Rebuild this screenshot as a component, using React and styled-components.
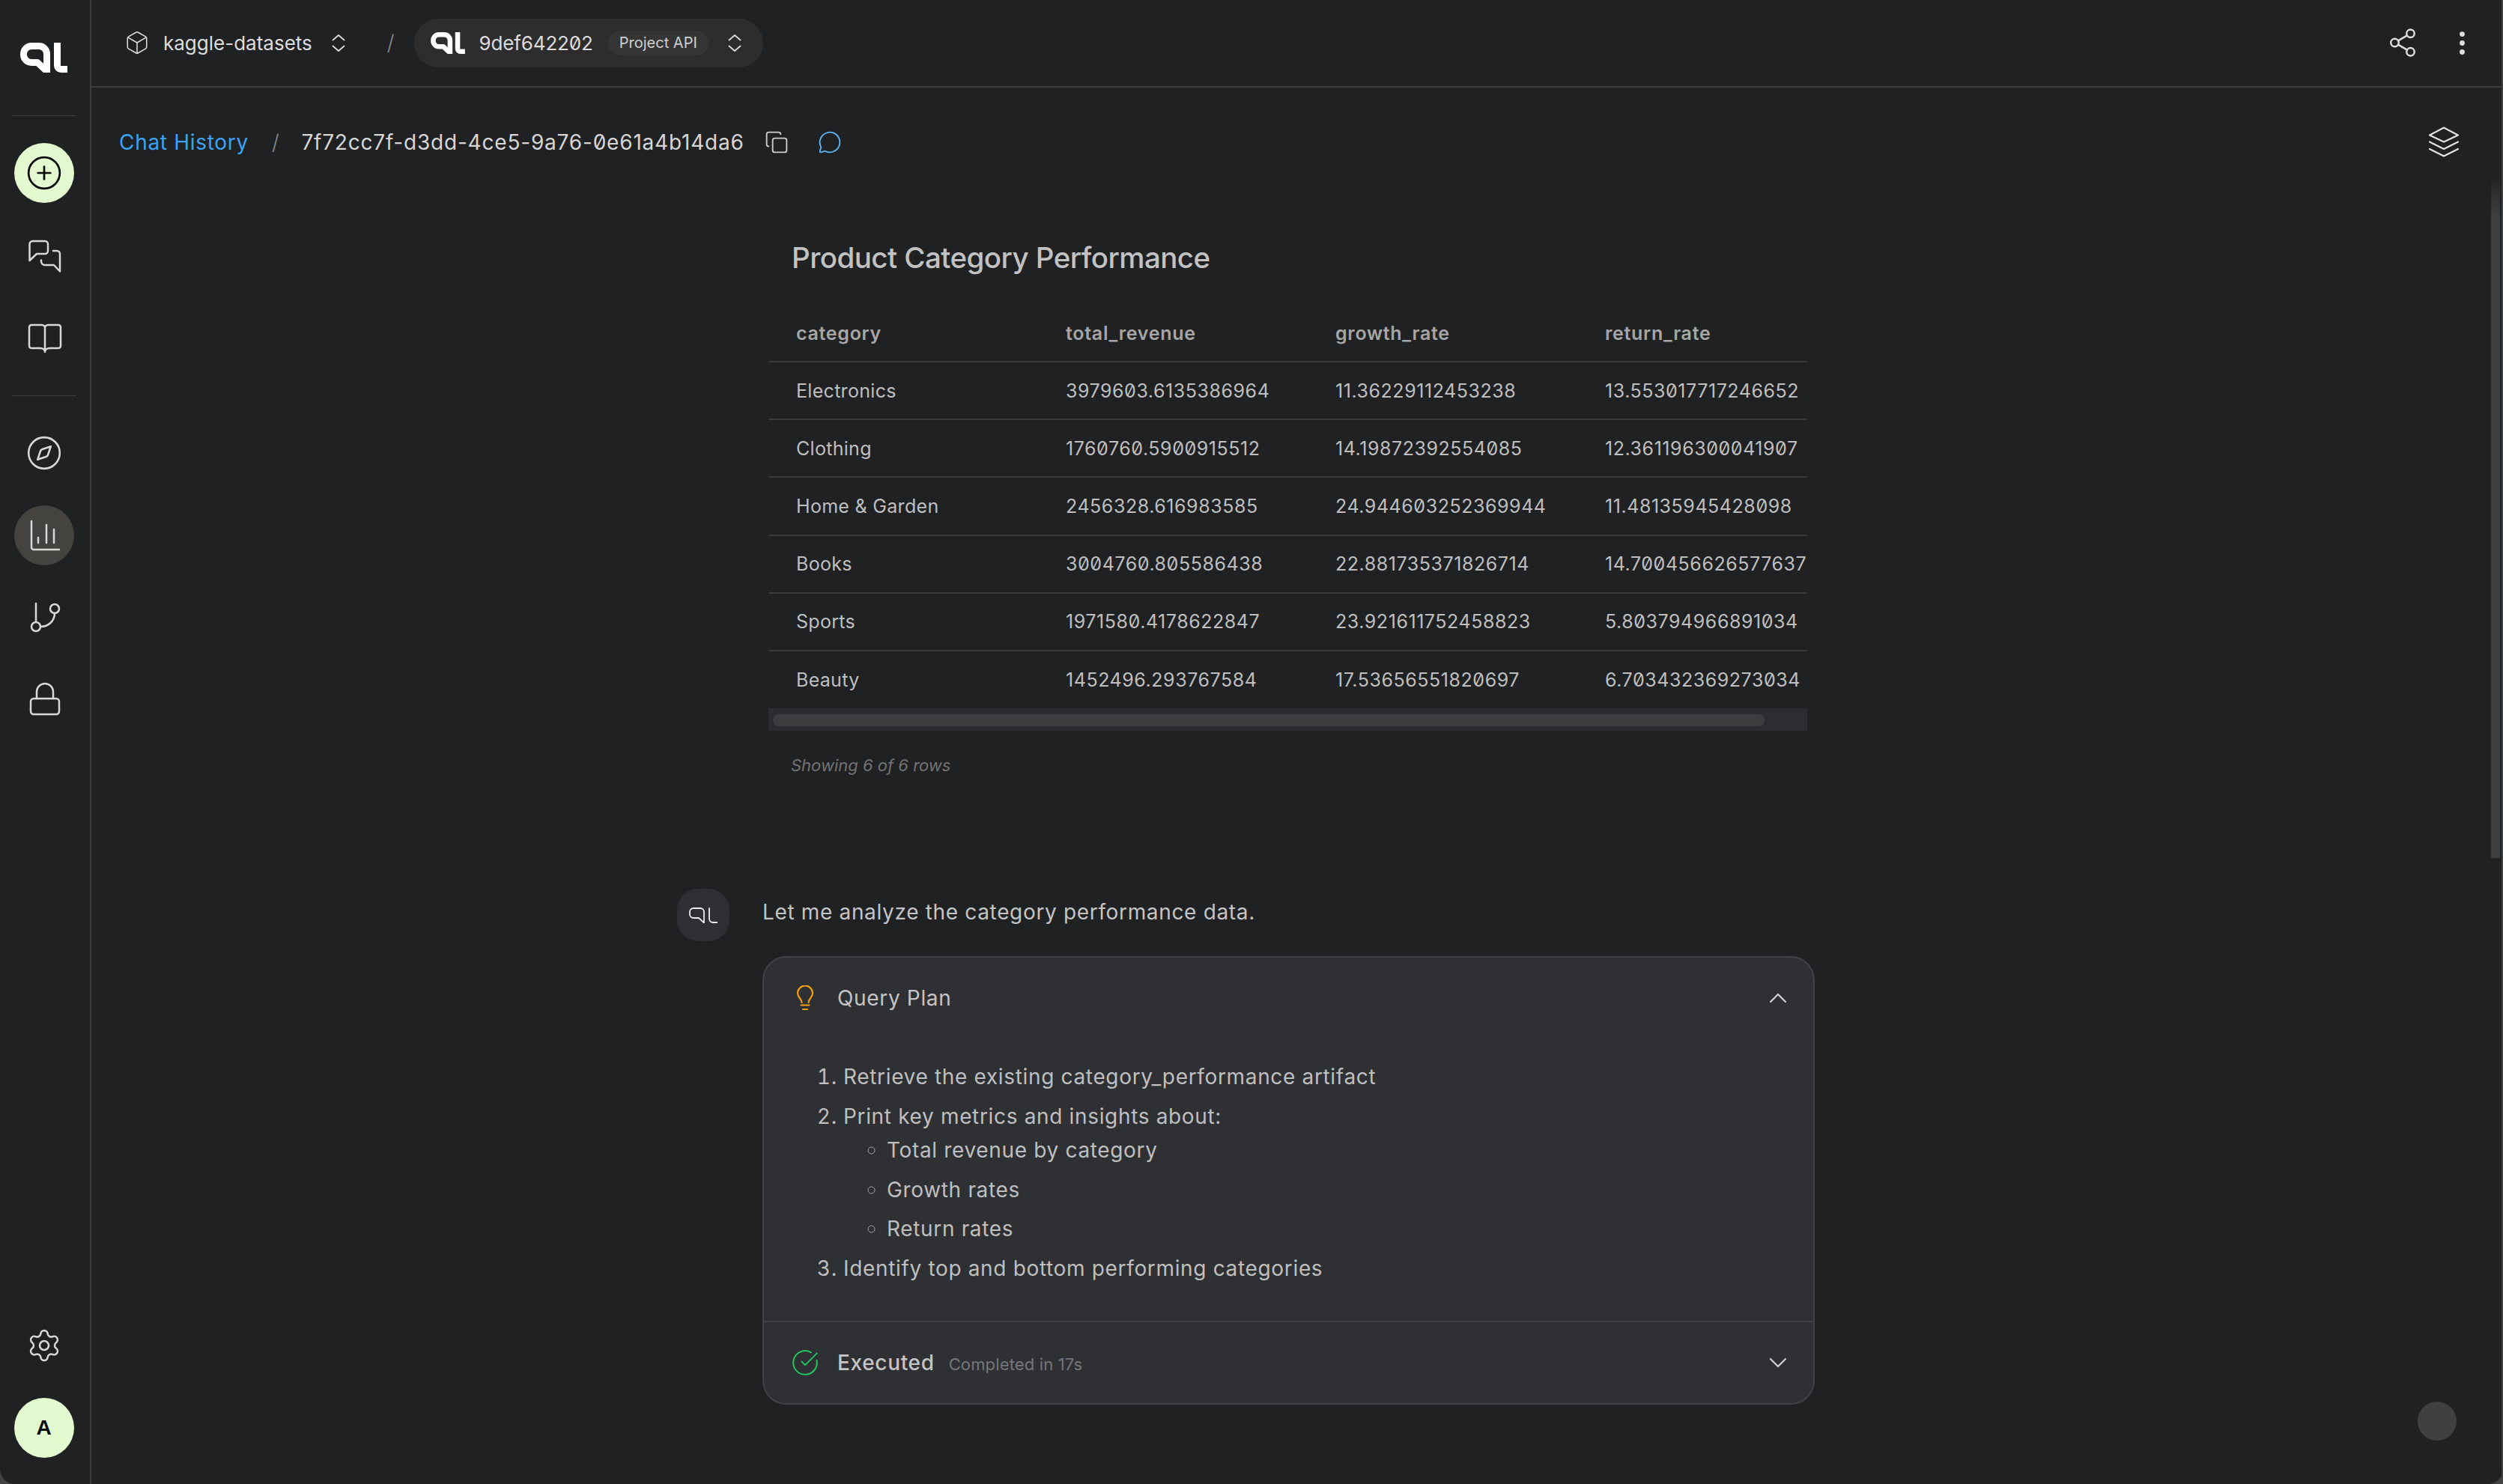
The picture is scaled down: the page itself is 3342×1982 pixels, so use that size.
import React from "react";
import styled, { createGlobalStyle } from "styled-components";
import {
  ChevronDown, ChevronUp, CircleCheckBig, CirclePlus, Compass, Copy, EllipsisVertical,
  MessageCircle, Settings, Share2, Box,
} from "lucide-react";

const Global = createGlobalStyle`
  html, body { margin: 0; padding: 0; background: #424242; }
  body { font-family: "Inter", "Liberation Sans", sans-serif; font-feature-settings: "zero" 1; -webkit-font-smoothing: antialiased; }
  * { box-sizing: border-box; }
`;

const Shell = styled.div`
  display: flex; width: 3342px; height: 1982px; overflow: hidden;
  background: #202123; border-radius: 0 0 20px 20px;
`;
const Sidebar = styled.aside`
  width: 122px; flex: none; display: flex; flex-direction: column; align-items: center;
  border-right: 2px solid #3c3d3f; padding: 0 3px 35px 0;
`;
const LogoMark = styled.div`
  display: flex; height: 154px; align-items: center; color: #fff;
`;
const Rule = styled.div`
  width: 86px; height: 1px; background: #3c3d3f; margin: ${p => p.$m || "0 0 36px"};
  flex: none;
`;
const NavStack = styled.nav`
  display: flex; flex-direction: column; gap: 30px; align-items: center;
`;
const NavButton = styled.div`
  width: 80px; height: 80px; border-radius: 50%; display: flex; align-items: center; justify-content: center;
  color: ${p => (p.$tone === "accent" ? "#0b0b0b" : "#d8d8d8")};
  background: ${p => (p.$tone === "accent" ? "#e3fad0" : p.$tone === "active" ? "#45433f" : "transparent")};
`;
const Spacer = styled.div`flex: 1;`;
const UserBadge = styled.div`
  width: 80px; height: 80px; border-radius: 50%; background: #e3fad0; color: #0b0b0b;
  display: flex; align-items: center; justify-content: center; font: 700 28px "Liberation Sans", sans-serif;
`;
const Main = styled.main`
  position: relative; flex: 1; min-width: 0; display: flex; flex-direction: column;
  border-right: 2px solid #3c3d3f;
`;
const TopBar = styled.header`
  height: 117px; flex: none; display: flex; align-items: center; padding: 0 0 1px 44px;
  border-bottom: 2px solid #3c3d3f; color: #dcdcdc; font-size: 26px;
`;
const Crumb = styled.div`
  display: flex; align-items: center; gap: 15px; margin-right: 56px;
`;
const CrumbLabel = styled.span`margin-left: 3px;`;
const CrumbToggle = styled.span`display: flex; margin-left: 11px;`;
const Slash = styled.span`
  color: #8a8a8a; font-size: 28px; font-weight: 300;
`;
const ProjectPill = styled.div`
  display: flex; align-items: center; height: 65px; margin-left: 26px; padding: 0 29px 0 22px; border-radius: 33px;
  background: #2d2d2e;
`;
const PillLogo = styled.span`display: flex; color: #fff;`;
const PillId = styled.span`margin: 0 20px 0 19px; letter-spacing: -.15px;`;
const PillTag = styled.span`
  display: flex; align-items: center; height: 33px; padding: 0 15px; margin-right: 26px; border-radius: 17px;
  background: #353535; font-size: 20px; color: #cfcfcf;
`;
const TopActions = styled.div`
  margin-left: auto; display: flex; align-items: center; gap: 38px; padding-right: 32px; color: #dedede;
`;
const BreadcrumbRow = styled.div`
  flex: none; height: 74px; margin-top: 36px; padding: 0 56px 0 37px; display: flex; align-items: center;
  font-size: 28px; letter-spacing: .7px; color: #d6d6d6;
`;
const ChatLink = styled.a`color: #3ba3f4;`;
const ChatId = styled.span`margin: 0 27px 0 0; letter-spacing: .8px;`;
const CrumbSlash = styled(Slash)`margin: 0 29px 0 31px;`;
const CopyWrap = styled.span`display: flex; margin-right: 39px; color: #cfcfcf;`;
const BlueWrap = styled.span`display: flex; color: #5fb6f5;`;
const LayerWrap = styled.span`display: flex; margin-left: auto; color: #e2e2e2;`;
const Scroller = styled.div`
  flex: 1; min-height: 0; padding: 88px 135px 0 0; overflow: hidden;
`;
const Thread = styled.div`
  width: 1519px; margin: 0 auto; display: flex; flex-direction: column;
`;
const Artifact = styled.section`
  margin-left: 122px; width: 1387px; display: flex; flex-direction: column;
`;
const ArtifactTitle = styled.h2`
  margin: 0 0 31px 31px; height: 60px; line-height: 58px; font-size: 38.5px; font-weight: 500; color: #c2c2c2; letter-spacing: -.55px;
`;
const TableClip = styled.div`overflow: hidden; width: 1387px;`;
const DataTable = styled.table`
  width: 1440px; table-layout: fixed; border-collapse: collapse; font-size: 25px; color: #bfbfbf;
`;
const HeadCell = styled.th`
  height: 77px; padding: 1px 0 0 37px; text-align: left; font-weight: 600; color: #a6a6a6; white-space: nowrap;
  letter-spacing: .7px; border-bottom: 2px solid #38393b;
`;
const BodyCell = styled.td`
  height: 77.2px; padding: 0 0 0 37px; white-space: nowrap; letter-spacing: ${p => (p.$num ? ".55px" : ".3px")};
`;
const BodyRow = styled.tr`
  &:not(:last-child) td { border-bottom: 2px solid #38393b; }
`;
const Track = styled.div`
  height: 30px; padding: 8px 57px 6px 6px; background: #2c2d31;
`;
const Thumb = styled.div`height: 16px; border-radius: 8px; background: #3c3d3e;`;
const RowCount = styled.div`
  margin: 30px 0 0 30px; height: 32px; line-height: 32px; font-size: 22px; font-style: italic; color: #737373;
`;
const Message = styled.article`
  margin-top: 149px; display: flex; gap: 44px; align-items: flex-start;
`;
const Avatar = styled.div`
  flex: none; width: 70px; height: 70px; border-radius: 28px; background: #2d2f32;
  display: flex; align-items: center; justify-content: center; color: #eee;
`;
const MessageBody = styled.div`flex: 1; min-width: 0;`;
const Lead = styled.p`
  margin: 0 0 25px; height: 65px; padding-top: 14px; line-height: 34px; font-size: 28px; letter-spacing: .66px; color: #c4c4c4; font-weight: 400;
`;
const Card = styled.div`
  border: 2px solid #414245; border-radius: 32px; background: #2f3034; overflow: hidden;
`;
const CardHead = styled.div`
  display: flex; align-items: center; height: ${p => p.$h}px; padding: 0 27px 0 33px; color: #c4c4c4;
  border-top: ${p => (p.$sep ? "2px solid #3e3f42" : "none")};
`;
const IconSlot = styled.span`
  width: 44px; display: flex; justify-content: center; margin-right: 21px; color: ${p => p.$c};
`;
const CardTitle = styled.span`font-size: 28px; letter-spacing: .66px; font-weight: ${p => p.$w || 400}; `;
const CardMeta = styled.span`font-size: 22px; letter-spacing: .15px; color: #767779; margin: 3px 0 0 19px;`;
const CardChevron = styled.span`display: flex; margin-left: auto; color: #d2d2d2;`;
const Plan = styled.ol`
  margin: 0; padding: 25px 0 44px 106px; font-size: 28px; letter-spacing: .66px; color: #bfbfbf; line-height: 52.5px;
`;
const PlanItem = styled.li``;
const SubList = styled.ul`
  list-style-type: circle; margin: -7px 0 0; padding: 0 0 0 58px;
  li::marker { color: #a8a8a8; }
`;
const FloatDot = styled.div`
  position: absolute; right: 60px; bottom: 58px; width: 52px; height: 52px; border-radius: 50%; background: #3f4042;
`;
const ScrollRail = styled.div`
  position: absolute; right: 2px; top: 236px; width: 12px; height: 910px; background: linear-gradient(#202123, #3e3e3e 50px);
`;

const block = { display: "block" };
function QL({ w, h }) {
  return (
    <svg width={w} height={h} viewBox="0 0 63 40" fill="none" stroke="currentColor" strokeWidth={9} strokeLinejoin="round" style={block}>
      <path d="M35.5 41 V15 a10.5 10.5 0 0 0-10.5-10.5 H15 a10.5 10.5 0 0 0-10.5 10.5 v1 a10.5 10.5 0 0 0 10.5 10.5 H23 L35.5 38" />
      <path d="M49.5 0 V30.5 a5 5 0 0 0 5 5 H63" />
    </svg>
  );
}
const QLThin = () => (
  <svg width={38} height={21} viewBox="0 0 38 21" fill="none" stroke="currentColor" strokeWidth={1.8} strokeLinecap="round" strokeLinejoin="round" style={block}>
    <path d="M20 20.5 V6 a5 5 0 0 0-5-5 H6 a5 5 0 0 0-5 5 v3 a5 5 0 0 0 5 5 H13 L20 20.5" />
    <path d="M27 1 V15 a5 5 0 0 0 5 5 H37.5" />
  </svg>
);
function Draw({ size = 48, w, h, vb, sw = 2.5, children }) {
  return (
    <svg width={w || size} height={h || size} viewBox={vb || `0 0 ${size} ${size}`} fill="none" stroke="currentColor" strokeWidth={sw} strokeLinecap="round" strokeLinejoin="round" style={block}>
      {children}
    </svg>
  );
}
const UpDown = () => (
  <Draw w={18} h={23} vb="0 0 18 23" sw={1.8}>
    <path d="M1.5 7.5 L9 1 L16.5 7.5 M1.5 15.5 L9 22 L16.5 15.5" />
  </Draw>
);
const ChatsIcon = () => (
  <Draw>
    <path d="M4.5 31 V9 a4 4 0 0 1 4-4 H25 a4 4 0 0 1 4 4 V18 a4 4 0 0 1-4 4 H14 Z" />
    <path d="M36 18 H41 a4 4 0 0 1 4 4 V45.5 L37 37 H25 a5 5 0 0 1-5-5 V30.5" />
  </Draw>
);
const BookIcon = () => (
  <Draw>
    <path d="M25 11 a4 4 0 0 0-4-4 H7 a3 3 0 0 0-3 3 V35 a3 3 0 0 0 3 3 H19 c3 0 6 2 6 5 c0-3 3-5 6-5 H43 a3 3 0 0 0 3-3 V10 a3 3 0 0 0-3-3 H29 a4 4 0 0 0-4 4 V43" />
  </Draw>
);
const BarsIcon = () => (
  <Draw>
    <path d="M7 5 V40 a3 3 0 0 0 3 3 H44" />
    <path d="M16 27 V34 M27 10 V34 M37 16 V34" />
  </Draw>
);
const BranchIcon = () => (
  <Draw>
    <path d="M13 5 V30" />
    <circle cx="13" cy="36" r="6" />
    <circle cx="38" cy="12" r="6" />
    <path d="M38 18 C38 28 30 36 19 36" />
  </Draw>
);
const LockIcon = () => (
  <Draw>
    <rect x="6" y="22" width="38" height="21" rx="4" />
    <path d="M14 22 V13 a11 11 0 0 1 22 0 V22" />
  </Draw>
);
const LayersIcon = () => (
  <Draw w={42} h={42} vb="0 0 42 42" sw={2.2}>
    <path d="M21 1.5 L40 11.5 L21 20.5 L2 11.5 Z" />
    <path d="M2 20.5 L21 30 L40 20.5" />
    <path d="M2 30 L21 39.5 L40 30" />
  </Draw>
);
const BulbIcon = () => (
  <Draw w={24} h={34} vb="0 0 24 34" sw={2.2}>
    <path d="M7.5 23 C7.5 18 2 16 2 10.5 a10 10 0 0 1 20 0 C22 16 16.5 18 16.5 23" />
    <path d="M6.5 26.5 H17.5 M9 32 H15" />
  </Draw>
);

const COLS = ["category", "total_revenue", "growth_rate", "return_rate"];
const ROWS = [
  ["Electronics", "3979603.6135386964", "11.36229112453238", "13.553017717246652"],
  ["Clothing", "1760760.5900915512", "14.19872392554085", "12.361196300041907"],
  ["Home & Garden", "2456328.616983585", "24.944603252369944", "11.48135945428098"],
  ["Books", "3004760.805586438", "22.881735371826714", "14.700456626577637"],
  ["Sports", "1971580.4178622847", "23.921611752458823", "5.803794966891034"],
  ["Beauty", "1452496.293767584", "17.53656551820697", "6.703432369273034"],
];

export default function App() {
  return (
    <>
      <Global />
      <Shell>
        <Sidebar>
          <LogoMark><QL w={63} h={40} /></LogoMark>
          <Rule />
          <NavStack>
            <NavButton $tone="accent"><CirclePlus size={50} strokeWidth={1.3} /></NavButton>
            <NavButton><ChatsIcon /></NavButton>
            <NavButton><BookIcon /></NavButton>
          </NavStack>
          <Rule $m="37px 0 36px" />
          <NavStack>
            <NavButton><Compass size={50} strokeWidth={1.25} /></NavButton>
            <NavButton $tone="active"><BarsIcon /></NavButton>
            <NavButton><BranchIcon /></NavButton>
            <NavButton><LockIcon /></NavButton>
          </NavStack>
          <Spacer />
          <NavStack>
            <NavButton><Settings size={48} strokeWidth={1.25} /></NavButton>
            <UserBadge>A</UserBadge>
          </NavStack>
        </Sidebar>
        <Main>
          <TopBar>
            <Crumb>
              <Box size={34} strokeWidth={1.1} />
              <CrumbLabel>kaggle-datasets</CrumbLabel>
              <CrumbToggle><UpDown /></CrumbToggle>
            </Crumb>
            <Slash>/</Slash>
            <ProjectPill>
              <PillLogo><QL w={46} h={29} /></PillLogo>
              <PillId>9def642202</PillId>
              <PillTag>Project API</PillTag>
              <UpDown />
            </ProjectPill>
            <TopActions>
              <Share2 size={42} strokeWidth={1.4} />
              <EllipsisVertical size={41} strokeWidth={2} />
            </TopActions>
          </TopBar>
          <BreadcrumbRow>
            <ChatLink>Chat History</ChatLink>
            <CrumbSlash>/</CrumbSlash>
            <ChatId>7f72cc7f-d3dd-4ce5-9a76-0e61a4b14da6</ChatId>
            <CopyWrap><Copy size={32} strokeWidth={1.4} /></CopyWrap>
            <BlueWrap><MessageCircle size={32} strokeWidth={1.4} /></BlueWrap>
            <LayerWrap><LayersIcon /></LayerWrap>
          </BreadcrumbRow>
          <Scroller>
            <Thread>
              <Artifact>
                <ArtifactTitle>Product Category Performance</ArtifactTitle>
                <TableClip>
                  <DataTable>
                    <thead><tr>{COLS.map(c => <HeadCell key={c}>{c}</HeadCell>)}</tr></thead>
                    <tbody>
                      {ROWS.map(r => (
                        <BodyRow key={r[0]}>{r.map((v, i) => <BodyCell key={i} $num={i > 0}>{v}</BodyCell>)}</BodyRow>
                      ))}
                    </tbody>
                  </DataTable>
                </TableClip>
                <Track><Thumb /></Track>
                <RowCount>Showing 6 of 6 rows</RowCount>
              </Artifact>
              <Message>
                <Avatar><QLThin /></Avatar>
                <MessageBody>
                  <Lead>Let me analyze the category performance data.</Lead>
                  <Card>
                    <CardHead $h={108}>
                      <IconSlot $c="#f59e0b"><BulbIcon /></IconSlot>
                      <CardTitle>Query Plan</CardTitle>
                      <CardChevron><ChevronUp size={40} strokeWidth={1.3} /></CardChevron>
                    </CardHead>
                    <Plan>
                      <PlanItem>Retrieve the existing category_performance artifact</PlanItem>
                      <PlanItem>
                        Print key metrics and insights about:
                        <SubList>
                          <li>Total revenue by category</li>
                          <li>Growth rates</li>
                          <li>Return rates</li>
                        </SubList>
                      </PlanItem>
                      <PlanItem>Identify top and bottom performing categories</PlanItem>
                    </Plan>
                    <CardHead $h={110} $sep>
                      <IconSlot $c="#22c55e"><CircleCheckBig size={38} strokeWidth={1.25} /></IconSlot>
                      <CardTitle $w={500}>Executed</CardTitle>
                      <CardMeta>Completed in 17s</CardMeta>
                      <CardChevron><ChevronDown size={40} strokeWidth={1.3} /></CardChevron>
                    </CardHead>
                  </Card>
                </MessageBody>
              </Message>
            </Thread>
          </Scroller>
          <ScrollRail />
          <FloatDot />
        </Main>
      </Shell>
    </>
  );
}
